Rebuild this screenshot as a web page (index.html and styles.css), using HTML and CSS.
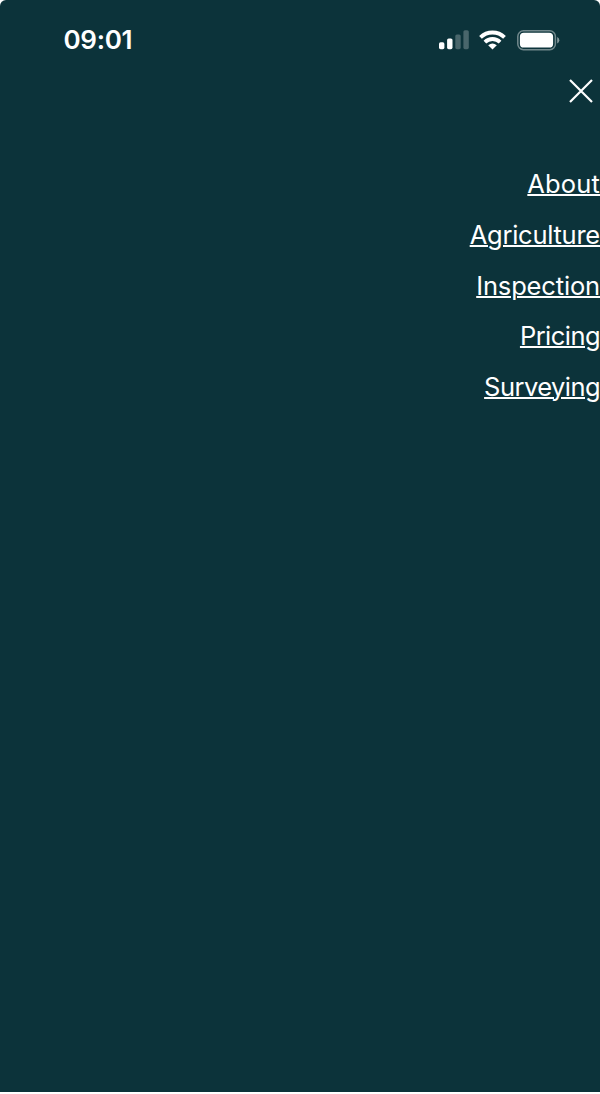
FILE: index.html
```html
<!DOCTYPE html>
<html lang="en">
<head>
<meta charset="utf-8">
<title>Menu</title>
<link rel="stylesheet" href="styles.css">
</head>
<body>
<div class="screen">
  <header class="status">
    <span class="time">09:01</span>
    <div class="indicators">
      <svg class="signal" width="30" height="20" viewBox="0 0 30 20" fill="#fff">
        <rect x="0" y="12.3" width="5.4" height="6.9" rx="1.6"/>
        <rect x="8.1" y="8.5" width="5.4" height="10.7" rx="1.6"/>
        <rect x="16.3" y="4.5" width="5.4" height="14.7" rx="1.6" opacity=".25"/>
        <rect x="24.4" y="0.2" width="5.4" height="19" rx="1.6" opacity=".25"/>
      </svg>
      <svg class="wifi" width="27" height="20" viewBox="0 0 27 20" fill="none" stroke="#fff" stroke-width="3.9">
        <path d="M1.5 7.4A17.3 17.3 0 0 1 25.5 7.4"/>
        <path d="M5.9 12.1A11 11 0 0 1 21.1 12.1"/>
        <path d="M13.5 19.5L9.2 15.3Q13.5 11.9 17.8 15.3Z" fill="#fff" stroke="none"/>
      </svg>
      <svg class="battery" width="43" height="21" viewBox="0 0 43 21">
        <rect x=".8" y=".8" width="37.6" height="18.9" rx="5.7" fill="none" stroke="#fff" stroke-opacity=".42" stroke-width="1.5"/>
        <rect x="2.9" y="2.8" width="33.2" height="14.8" rx="3.9" fill="#fff"/>
        <path d="M40.2 7.1Q42.3 8.1 42.3 10.3T40.2 13.5Z" fill="#fff" opacity=".5"/>
      </svg>
    </div>
  </header>
  <button class="close" aria-label="Close">
    <svg width="24" height="24" viewBox="0 0 24 24" stroke="#fff" stroke-width="2.2"><path d="M1 1L23 23M23 1L1 23"/></svg>
  </button>
  <nav class="menu">
    <a class="link about" href="#">About</a>
    <a class="link agriculture" href="#">Agriculture</a>
    <a class="link inspection" href="#">Inspection</a>
    <a class="link pricing" href="#">Pricing</a>
    <a class="link surveying" href="#">Surveying</a>
  </nav>
</div>
</body>
</html>
```
FILE: styles.css
```css
body {
  margin: 0;
  background: #fff;
  font-family: Inter, "Liberation Sans", sans-serif;
  color: #fff;
}
.screen {
  height: 1092px;
  background: #0c333a;
  border-radius: 6px 6px 0 0;
  display: flex;
  flex-direction: column;
  align-items: flex-end;
}
.status {
  box-sizing: border-box;
  width: 100%;
  height: 78px;
  padding: 20px 40px 18px 63.5px;
  display: flex;
  justify-content: space-between;
  align-items: center;
}
.time {
  font-size: 26px;
  font-weight: 600;
  line-height: 40px;
  letter-spacing: -0.3px;
}
.indicators {
  display: flex;
  align-items: center;
  gap: 10.7px;
}
.close {
  margin: 1px 7px 0 0;
  padding: 0;
  border: 0;
  background: none;
  height: 24px;
}
.close svg, .indicators svg {
  display: block;
}
.menu {
  margin-top: 56px;
  display: flex;
  flex-direction: column;
  align-items: flex-end;
}
.link {
  color: #fff;
  font-size: 25.5px;
  font-weight: 380;
  line-height: 50.75px;
  white-space: nowrap;
  text-decoration-line: underline;
  text-decoration-thickness: 2px;
  text-underline-offset: 1px;
}
.about {
  letter-spacing: 0.15px;
}
.agriculture {
  letter-spacing: -0.25px;
}
.inspection {
  letter-spacing: -0.15px;
}
.pricing {
  letter-spacing: -0.55px;
}
.surveying {
  letter-spacing: -0.55px;
}
```
